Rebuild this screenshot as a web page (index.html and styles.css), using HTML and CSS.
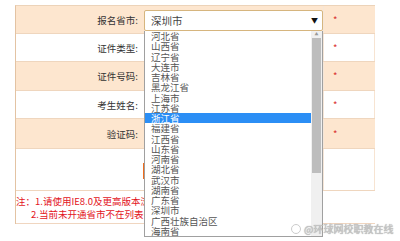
FILE: index.html
```html
<!DOCTYPE html>
<html lang="zh-CN">
<head>
    <meta charset="UTF-8">
    <meta name="viewport" content="width=device-width, initial-scale=1.0">
    <title>报名查询</title>
    <link rel="stylesheet" href="styles.css">
</head>
<body>

    <div class="form">
        <div class="row peach">
            <div class="label">报名省市:</div>
            <div class="field">
                <div class="select">
                    <span>深圳市</span>
                    <span class="arrow">&#9660;</span>
                </div>
            </div>
            <div class="star">*</div>
        </div>
        <div class="row">
            <div class="label">证件类型:</div>
            <div class="field"></div>
            <div class="star">*</div>
        </div>
        <div class="row peach h29">
            <div class="label">证件号码:</div>
            <div class="field"></div>
            <div class="star">*</div>
        </div>
        <div class="row">
            <div class="label">考生姓名:</div>
            <div class="field"></div>
            <div class="star">*</div>
        </div>
        <div class="row peach h30">
            <div class="label">验证码:</div>
            <div class="field"></div>
            <div class="star">*</div>
        </div>
        <div class="row h42">
            <div class="label"></div>
            <div class="field"><div class="btn">查询</div></div>
            <div class="star"></div>
        </div>
        <div class="notes">
            <p>注：1.请使用IE8.0及更高版本浏览器</p>
            <p class="indent">2.当前未开通省市不在列表中显示</p>
        </div>
    </div>

    <!-- open select list -->
    <div class="list">
        <div class="item">河北省</div>
        <div class="item">山西省</div>
        <div class="item">辽宁省</div>
        <div class="item">大连市</div>
        <div class="item">吉林省</div>
        <div class="item">黑龙江省</div>
        <div class="item">上海市</div>
        <div class="item">江苏省</div>
        <div class="item active">浙江省</div>
        <div class="item">福建省</div>
        <div class="item">江西省</div>
        <div class="item">山东省</div>
        <div class="item">河南省</div>
        <div class="item">湖北省</div>
        <div class="item">武汉市</div>
        <div class="item">湖南省</div>
        <div class="item">广东省</div>
        <div class="item">深圳市</div>
        <div class="item">广西壮族自治区</div>
        <div class="item">海南省</div>
        <div class="scrollbar">
            <div class="up">&#9650;</div>
            <div class="thumb"></div>
        </div>
    </div>

    <div class="watermark"><span class="logo"></span>@环球网校职教在线</div>

</body>
</html>
```

FILE: styles.css
```css
body {
    margin: 0;
    padding: 5px 0 0 15px;
    background-color: #fff;
    font-family: "Noto Sans CJK SC", sans-serif;
    font-size: 9.5px;
    color: #333;
}
.form {
    width: 359px;
    border-left: 1px solid #e3c3a3;
    border-top: 1px solid #ecd3b9;
}
.row {
    display: grid;
    grid-template-columns: 125px 182px 52px;
    height: 28px;
    box-sizing: border-box;
    border-bottom: 1px solid #efd6be;
}
.row.h29 {
    height: 29px;
}
.row.h30 {
    height: 30px;
}
.row.h42 {
    height: 42px;
}
.peach {
    background-color: #fde6cf;
}
.label {
    display: flex;
    align-items: center;
    justify-content: flex-end;
    padding-right: 3px;
}
.field {
    display: flex;
    align-items: center;
}
.star {
    display: flex;
    align-items: center;
    padding-left: 9px;
    color: #d9302c;
    border-left: 1px solid #f5e6d8;
}
.row:not(.peach) .star {
    border-right: 1px solid #f7e4d2;
}
.select {
    margin-left: 3px;
    margin-top: 1px;
    width: 179px;
    height: 21px;
    box-sizing: border-box;
    border: 1px solid #d6b57e;
    border-radius: 2px;
    background-color: #fff;
    display: flex;
    align-items: center;
    justify-content: space-between;
    padding: 0 4px 0 6px;
    font-size: 10.5px;
    color: #444;
}
.arrow {
    font-size: 7px;
    color: #111;
}
.btn {
    margin-left: 2px;
    margin-top: 3px;
    width: 50px;
    height: 16px;
    background-color: #ef6c1c;
    color: #fff;
    text-align: center;
    line-height: 16px;
}
.notes {
    height: 33px;
    box-sizing: border-box;
    padding-top: 4px;
    border-bottom: 1px solid #f0d6c0;
    color: #e3141c;
}
.notes p {
    margin: 0;
    line-height: 13px;
}
.notes .indent {
    padding-left: 15px;
}
.list {
    position: absolute;
    left: 144px;
    top: 31px;
    width: 179px;
    height: 206px;
    box-sizing: border-box;
    border: 1px solid #a0a0a0;
    border-top: none;
    background-color: #fff;
    overflow: hidden;
    color: #555;
}
.item {
    height: 10.25px;
    line-height: 10.25px;
    padding-left: 6px;
    font-size: 9.5px;
    white-space: nowrap;
    margin-right: 11px;
}
.item.active {
    background-color: #2b8ef5;
    color: #fff;
}
.scrollbar {
    position: absolute;
    right: 0;
    top: 0;
    width: 11px;
    height: 100%;
    background-color: #f0f0f0;
}
.up {
    height: 7px;
    font-size: 4px;
    line-height: 7px;
    text-align: center;
    color: #999;
}
.thumb {
    margin: 0 1px;
    height: 135px;
    background-color: #bdbdbd;
}
.watermark {
    position: absolute;
    left: 291px;
    top: 221px;
    display: flex;
    align-items: center;
    gap: 3px;
    font-size: 10px;
    color: #c8c8c8;
    text-shadow: 0 0 1px #888;
}
.logo {
    width: 8px;
    height: 8px;
    border-radius: 50%;
    border: 1px solid #ccc;
}
```
